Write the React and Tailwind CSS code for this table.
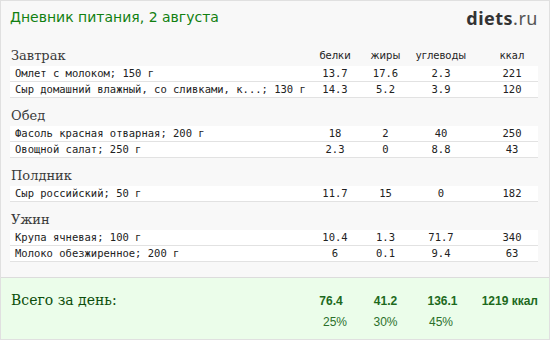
import React from "react";

const meals = [
  {
    name: "Завтрак",
    gap: "",
    items: [
      ["Омлет с молоком; 150 г", "13.7", "17.6", "2.3", "221"],
      ["Сыр домашний влажный, со сливками, к...; 130 г", "14.3", "5.2", "3.9", "120"],
    ],
  },
  {
    name: "Обед",
    gap: "mt-[7px]",
    items: [
      ["Фасоль красная отварная; 200 г", "18", "2", "40", "250"],
      ["Овощной салат; 250 г", "2.3", "0", "8.8", "43"],
    ],
  },
  {
    name: "Полдник",
    gap: "mt-[7px]",
    items: [["Сыр российский; 50 г", "11.7", "15", "0", "182"]],
  },
  {
    name: "Ужин",
    gap: "mt-[7px]",
    items: [
      ["Крупа ячневая; 100 г", "10.4", "1.3", "71.7", "340"],
      ["Молоко обезжиренное; 200 г", "6", "0.1", "9.4", "63"],
    ],
  },
];

const grid = "grid grid-cols-[1fr_50px_51px_60px_15px_52px]";
const mono = { fontFamily: '"DejaVu Sans Mono", monospace' };

export default function App() {
  return (
    <div className="w-[550px] h-[340px] border border-[#e0e0e0] bg-[#f8f8f8] flex flex-col overflow-hidden">
      <div className="h-[44px] flex justify-between items-start pl-[9px] pr-[11px] pt-[6px]">
        <div className="text-[14px] leading-[20px] text-[#118011] font-['DejaVu_Sans',sans-serif]">
          Дневник питания, 2 августа
        </div>
        <div className="text-[18px] leading-[22px] font-['Noto_Sans',sans-serif] tracking-[0.5px]">
          <span className="font-bold text-[#333333]">diets</span>
          <span className="text-[#555555]">.ru</span>
        </div>
      </div>
      <div className="pl-[9px] pr-[11px] flex flex-col">
        {meals.map((m, i) => (
          <div key={m.name} className={m.gap}>
            <div className={`${grid} h-[21px] items-start`}>
              <div className="text-[13px] text-[#3a3a3a] font-['DejaVu_Serif',serif] leading-[22px] pl-[1px]">
                {m.name}
              </div>
              {i === 0 ? (
                <>
                  <div className="text-center text-[10px] leading-[22px] text-[#222] font-['DejaVu_Sans',sans-serif]">белки</div>
                  <div className="text-center text-[10px] leading-[22px] text-[#222] font-['DejaVu_Sans',sans-serif]">жиры</div>
                  <div className="text-center text-[10px] leading-[22px] text-[#222] font-['DejaVu_Sans',sans-serif]">углеводы</div>
                  <div />
                  <div className="text-center text-[10px] leading-[22px] text-[#222] font-['DejaVu_Sans',sans-serif]">ккал</div>
                </>
              ) : null}
            </div>
            {m.items.map((it) => (
              <div
                key={it[0]}
                className={`${grid} h-[16px] bg-white border-b border-[#e2e2e2] items-center text-[10.5px] text-[#222] leading-[15px]`}
                style={mono}
              >
                <div className="pl-[5px] whitespace-nowrap">{it[0]}</div>
                <div className="text-center">{it[1]}</div>
                <div className="text-center">{it[2]}</div>
                <div className="text-center">{it[3]}</div>
                <div />
                <div className="text-center">{it[4]}</div>
              </div>
            ))}
          </div>
        ))}
      </div>
      <div className="mt-auto h-[62px] border-t border-[#dcdcdc] bg-[#ebfdea] pl-[9px] pr-[11px] pt-[12px]">
        <div className={`${grid} items-end`}>
          <div className="text-[14px] leading-[20px] text-[#0b4d0b] font-['DejaVu_Serif',serif] pl-[1px]">
            Всего за день:
          </div>
          <div className="text-center text-[12px] leading-[18px] font-bold text-[#1d6a1d] font-['Liberation_Sans',sans-serif] pr-[8px]">76.4</div>
          <div className="text-center text-[12px] leading-[18px] font-bold text-[#1d6a1d] font-['Liberation_Sans',sans-serif]">41.2</div>
          <div className="text-center text-[12px] leading-[18px] font-bold text-[#1d6a1d] font-['Liberation_Sans',sans-serif] pl-[3px]">136.1</div>
          <div className="col-span-2 text-right text-[12px] leading-[18px] font-bold text-[#1d6a1d] font-['Liberation_Sans',sans-serif] whitespace-nowrap">1219 ккал</div>
        </div>
        <div className={`${grid} mt-[3px]`}>
          <div />
          <div className="text-center text-[12px] text-[#2b702b] font-['Liberation_Sans',sans-serif]">25%</div>
          <div className="text-center text-[12px] text-[#2b702b] font-['Liberation_Sans',sans-serif]">30%</div>
          <div className="text-center text-[12px] text-[#2b702b] font-['Liberation_Sans',sans-serif]">45%</div>
        </div>
      </div>
    </div>
  );
}
